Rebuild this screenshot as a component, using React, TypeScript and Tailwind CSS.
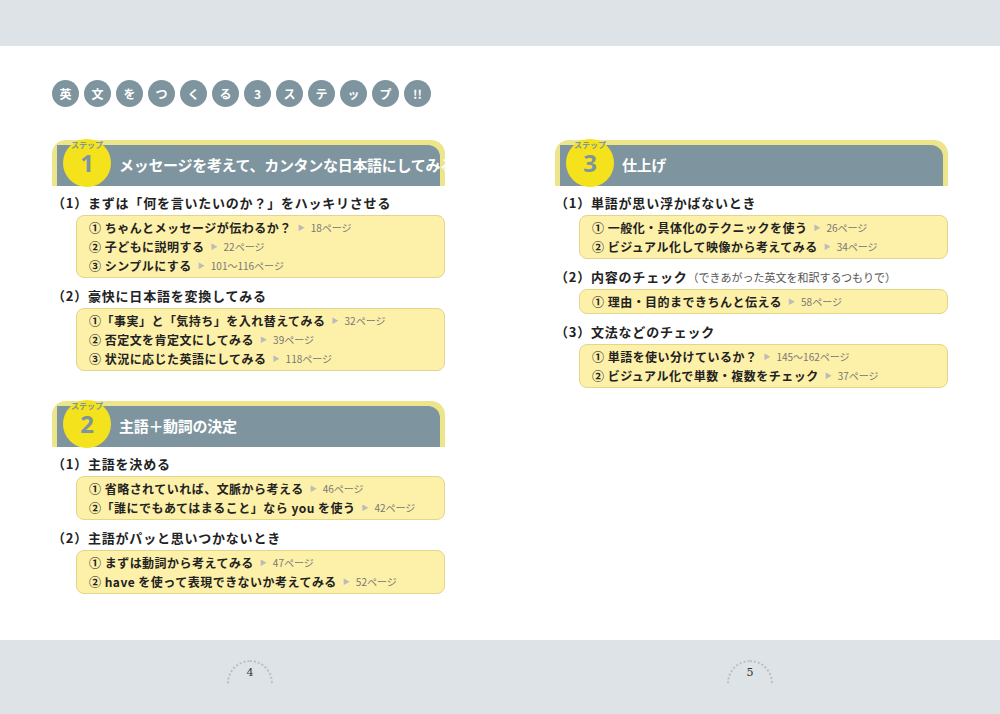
import React from "react";

const F = { fontFamily: '"Noto Sans CJK JP", "Noto Sans", sans-serif' };

function Header({ n, title }: { n: string; title: string }) {
  return (
    <div className="relative h-[46px] rounded-t-[14px] border-[3px] border-b-0 border-[#ece58a] bg-[#ece58a]">
      <div className="absolute inset-x-[2px] top-[2px] bottom-0 rounded-tr-[12px] bg-[#7e949e] flex items-center pl-[62px]">
        <span className="text-white text-[15px] font-bold tracking-[-0.02em] whitespace-nowrap">{title}</span>
      </div>
      <div className="absolute left-[8px] top-[-4px] w-[48px] h-[48px] rounded-full bg-[#f4e31c]">
        <span className="absolute left-0 right-0 top-[2px] text-center text-[8px] font-bold text-[#7e949e] leading-none">ステップ</span>
        <span className="absolute left-0 right-0 top-[12px] text-center text-[24px] font-bold text-[#7e949e] leading-none" style={{ fontFamily: '"Open Sans", sans-serif' }}>{n}</span>
      </div>
    </div>
  );
}

function Item({ label, page }: { label: string; page: string }) {
  return (
    <div className="flex items-center gap-[6px] h-[19px]">
      <span className="text-[12px] font-bold text-[#222] tracking-[0.04em] whitespace-nowrap">{label}</span>
      <span className="text-[7px] text-[#bbb]">▶</span>
      <span className="text-[10px] text-[#777] whitespace-nowrap">{page}</span>
    </div>
  );
}

function Sec(props: { num: string; title: string; note?: string; items: [string, string][] }) {
  return (
    <div className="flex flex-col gap-[2px]">
      <div className="text-[13px] font-bold text-[#222] tracking-[0.06em] h-[20px] leading-[20px] whitespace-nowrap">
        （{props.num}）{props.title}
        {props.note && <span className="text-[11px] font-normal text-[#555] tracking-normal">{props.note}</span>}
      </div>
      <div className="ml-[24px] rounded-[8px] border border-[#e3d58c] bg-[#fdf0a8] px-[12px] py-[2px]">
        {props.items.map(([l, p]) => <Item key={l} label={l} page={p} />)}
      </div>
    </div>
  );
}

export default function App() {
  const chars = ["英", "文", "を", "つ", "く", "る", "3", "ス", "テ", "ッ", "プ", "!!"];
  return (
    <div className="w-[1000px] h-[714px] flex flex-col bg-white" style={F}>
      <div className="h-[46px] bg-[#dde3e6]" />
      <div className="flex-1 flex px-[52px] gap-[110px]">
        <div className="w-[393px] flex flex-col">
          <div className="flex gap-[5px] mt-[34px]">
            {chars.map((c, i) => (
              <div key={i} className="w-[27px] h-[27px] rounded-full bg-[#7e949e] flex items-center justify-center text-white text-[12px] font-bold">{c}</div>
            ))}
          </div>
          <div className="mt-[33px]">
            <Header n="1" title="メッセージを考えて、カンタンな日本語にしてみる" />
          </div>
          <div className="flex flex-col gap-[8px] mt-[7px]">
            <Sec num="1" title="まずは「何を言いたいのか？」をハッキリさせる" items={[["① ちゃんとメッセージが伝わるか？", "18ページ"], ["② 子どもに説明する", "22ページ"], ["③ シンプルにする", "101～116ページ"]]} />
            <Sec num="2" title="豪快に日本語を変換してみる" items={[["①「事実」と「気持ち」を入れ替えてみる", "32ページ"], ["② 否定文を肯定文にしてみる", "39ページ"], ["③ 状況に応じた英語にしてみる", "118ページ"]]} />
          </div>
          <div className="mt-[30px]">
            <Header n="2" title="主語＋動詞の決定" />
          </div>
          <div className="flex flex-col gap-[8px] mt-[7px]">
            <Sec num="1" title="主語を決める" items={[["① 省略されていれば、文脈から考える", "46ページ"], ["②「誰にでもあてはまること」なら you を使う", "42ページ"]]} />
            <Sec num="2" title="主語がパッと思いつかないとき" items={[["① まずは動詞から考えてみる", "47ページ"], ["② have を使って表現できないか考えてみる", "52ページ"]]} />
          </div>
        </div>
        <div className="w-[393px] flex flex-col">
          <div className="mt-[94px]">
            <Header n="3" title="仕上げ" />
          </div>
          <div className="flex flex-col gap-[8px] mt-[7px]">
            <Sec num="1" title="単語が思い浮かばないとき" items={[["① 一般化・具体化のテクニックを使う", "26ページ"], ["② ビジュアル化して映像から考えてみる", "34ページ"]]} />
            <Sec num="2" title="内容のチェック" note="（できあがった英文を和訳するつもりで）" items={[["① 理由・目的まできちんと伝える", "58ページ"]]} />
            <Sec num="3" title="文法などのチェック" items={[["① 単語を使い分けているか？", "145～162ページ"], ["② ビジュアル化で単数・複数をチェック", "37ページ"]]} />
          </div>
        </div>
      </div>
      <div className="h-[74px] bg-[#dde3e6] flex">
        {["4", "5"].map((n) => (
          <div key={n} className="flex-1 flex justify-center pt-[20px]">
            <div className="w-[46px] h-[24px] rounded-t-full border-t-[2px] border-x-[2px] border-dotted border-[#b8c0c4] flex items-center justify-center text-[11px] text-[#333]" style={{ fontFamily: '"DejaVu Serif", serif' }}>{n}</div>
          </div>
        ))}
      </div>
    </div>
  );
}
